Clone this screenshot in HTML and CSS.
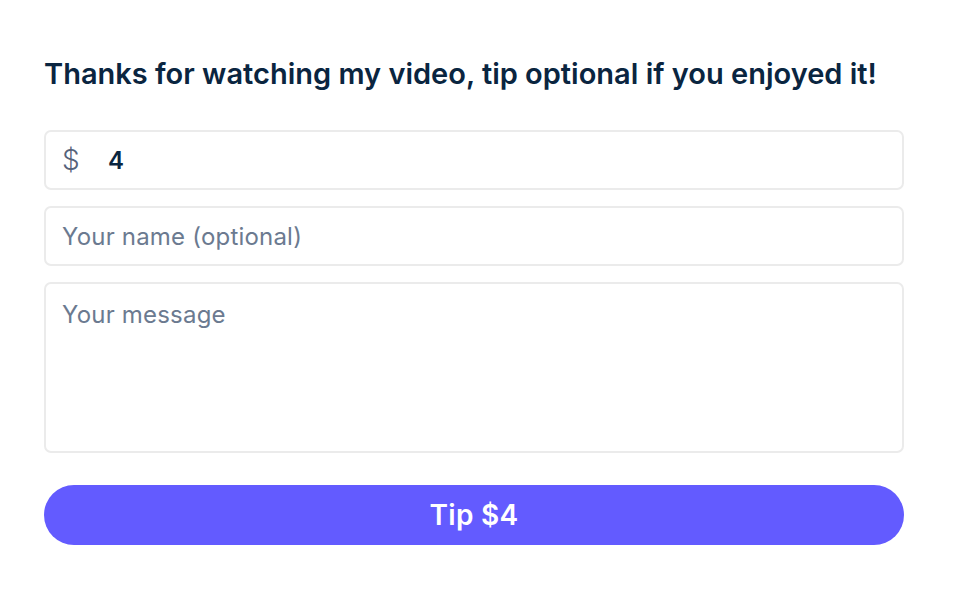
FILE: index.html
```html
<!DOCTYPE html>
<html lang="en">
<head>
<meta charset="utf-8">
<title>Tip</title>
<link rel="stylesheet" href="styles.css">
</head>
<body>
<main class="tip-form">
  <h1 class="title">Thanks for watching my video, tip optional if you enjoyed it!</h1>
  <div class="field amount">
    <span class="currency">$</span>
    <span class="amount-value">4</span>
  </div>
  <div class="field">
    <span class="placeholder">Your name (optional)</span>
  </div>
  <div class="field message">
    <span class="placeholder">Your message</span>
  </div>
  <button class="tip-button">Tip $4</button>
</main>
</body>
</html>
```

FILE: styles.css
```css
html, body {
  margin: 0;
  padding: 0;
  background: #ffffff;
}
body {
  font-family: Inter, "Noto Sans", "Liberation Sans", sans-serif;
  color: #0a2540;
}
.tip-form {
  width: 860px;
  margin: 0 0 0 44px;
  padding-top: 54px;
  display: flex;
  flex-direction: column;
}
.title {
  margin: 0 0 36px;
  font-size: 29px;
  font-weight: 600;
  line-height: 40px;
  letter-spacing: 0;
  color: #0a2540;
}
.field {
  box-sizing: border-box;
  height: 60px;
  border: 2px solid #ebebeb;
  border-radius: 7px;
  margin-bottom: 16px;
  display: flex;
  align-items: center;
  padding: 0 16px;
  font-size: 24px;
}
.currency {
  color: #56627a;
  font-size: 28px;
  font-weight: 300;
  width: 46px;
}
.amount-value {
  color: #0a2540;
  font-weight: 600;
  font-size: 24px;
}
.placeholder {
  color: #6b7a90;
  letter-spacing: 0.2px;
}
.message {
  height: 171px;
  align-items: flex-start;
  padding-top: 16px;
  margin-bottom: 32px;
}
.tip-button {
  height: 60px;
  border: none;
  border-radius: 30px;
  background: #635bff;
  color: #ffffff;
  font-family: inherit;
  font-size: 28px;
  font-weight: 600;
  letter-spacing: 0.3px;
}
```
